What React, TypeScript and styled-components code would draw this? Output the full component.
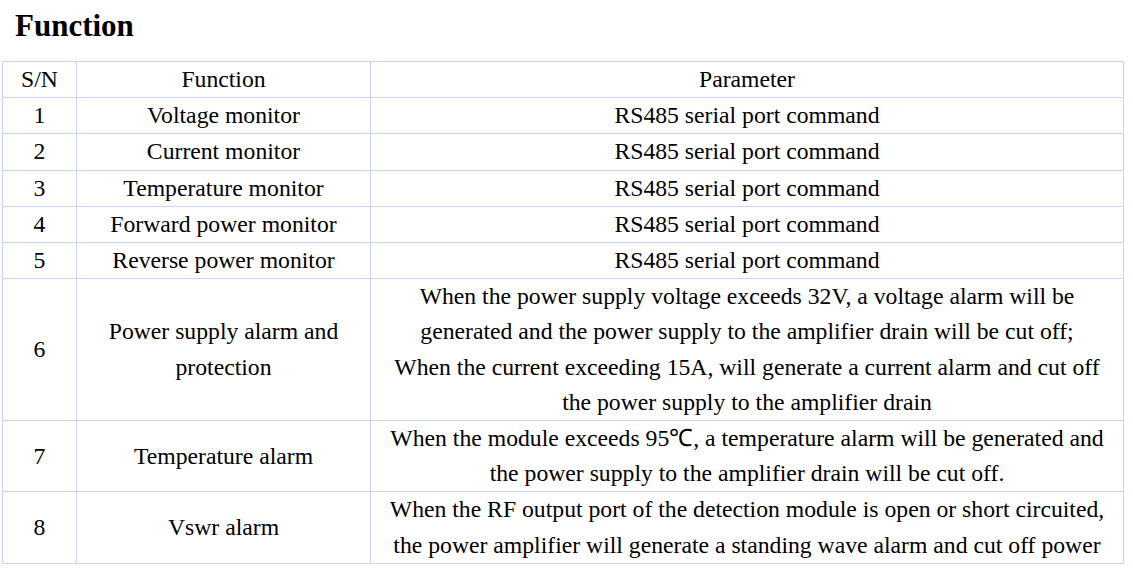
import React from "react";
import styled, { createGlobalStyle } from "styled-components";

const GlobalStyle = createGlobalStyle`
  html, body {
    margin: 0;
    padding: 0;
    background: #ffffff;
    color: #000000;
    font-family: "Liberation Serif", "Times New Roman", serif;
  }
`;

const Page = styled.div`
  width: 1133px;
  padding: 0 0 0 2px;
  box-sizing: border-box;
  font-family: "Liberation Serif", "Times New Roman", serif;
`;

const Title = styled.h2`
  margin: 0;
  padding: 6px 0 0 13px;
  height: 61px;
  box-sizing: border-box;
  font-family: "Liberation Serif", "Times New Roman", serif;
  font-size: 31px;
  font-weight: bold;
  line-height: 40px;
`;

const Table = styled.table`
  border-collapse: collapse;
  table-layout: fixed;
  width: 1122px;
  font-family: "Liberation Serif", "Times New Roman", serif;
  font-size: 23.7px;
  line-height: 35.2px;
  color: #000000;
`;

const Cell = styled.td<{ $w?: number }>`
  border: 1px solid #c6d5f0;
  padding: 0;
  text-align: center;
  vertical-align: middle;
  font-family: "Liberation Serif", "Times New Roman", serif;
  width: ${(p) => (p.$w ? `${p.$w}px` : "auto")};
  white-space: nowrap;
`;

const HeadCell = styled(Cell).attrs({ as: "th" })`
  font-weight: normal;
`;

const Line = styled.div`
  font-family: "Liberation Serif", "Times New Roman", serif;
`;

type Row = { sn: string; fn: string[]; param: string[] };

const rows: Row[] = [
  { sn: "1", fn: ["Voltage monitor"], param: ["RS485 serial port command"] },
  { sn: "2", fn: ["Current monitor"], param: ["RS485 serial port command"] },
  { sn: "3", fn: ["Temperature monitor"], param: ["RS485 serial port command"] },
  { sn: "4", fn: ["Forward power monitor"], param: ["RS485 serial port command"] },
  { sn: "5", fn: ["Reverse power monitor"], param: ["RS485 serial port command"] },
  {
    sn: "6",
    fn: ["Power supply alarm and", "protection"],
    param: [
      "When the power supply voltage exceeds 32V, a voltage alarm will be",
      "generated and the power supply to the amplifier drain will be cut off;",
      "When the current exceeding 15A, will generate a current alarm and cut off",
      "the power supply to the amplifier drain",
    ],
  },
  {
    sn: "7",
    fn: ["Temperature alarm"],
    param: [
      "When the module exceeds 95℃, a temperature alarm will be generated and",
      "the power supply to the amplifier drain will be cut off.",
    ],
  },
  {
    sn: "8",
    fn: ["Vswr alarm"],
    param: [
      "When the RF output port of the detection module is open or short circuited,",
      "the power amplifier will generate a standing wave alarm and cut off power",
    ],
  },
];

const App = () => {
  return (
    <Page>
      <GlobalStyle />
      <Title>Function</Title>
      <Table>
        <thead>
          <tr>
            <HeadCell $w={73}>S/N</HeadCell>
            <HeadCell $w={293}>Function</HeadCell>
            <HeadCell>Parameter</HeadCell>
          </tr>
        </thead>
        <tbody>
          {rows.map((r) => (
            <tr key={r.sn}>
              <Cell>{r.sn}</Cell>
              <Cell>
                {r.fn.map((t, i) => (
                  <Line key={i}>{t}</Line>
                ))}
              </Cell>
              <Cell>
                {r.param.map((t, i) => (
                  <Line key={i}>{t}</Line>
                ))}
              </Cell>
            </tr>
          ))}
        </tbody>
      </Table>
    </Page>
  );
};

export default App;
